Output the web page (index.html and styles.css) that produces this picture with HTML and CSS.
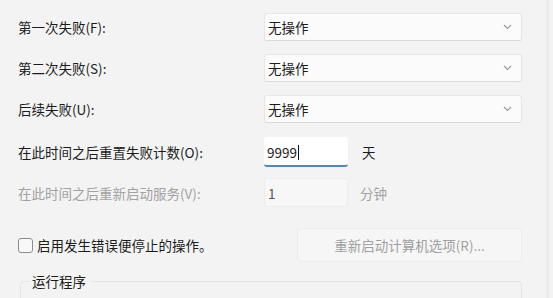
FILE: index.html
```html
<!DOCTYPE html>
<html lang="zh-CN">
<head>
<meta charset="utf-8">
<link rel="stylesheet" href="styles.css">
</head>
<body>
<div class="page">
  <div class="form">
    <div class="row r1">
      <div class="label">第一次失败(F):</div>
      <div class="select"><span>无操作</span><svg class="chev" width="9" height="6" viewBox="0 0 9 6"><path d="M1 1 L4.5 4.5 L8 1" fill="none" stroke="#9a9a9a" stroke-width="1.1"/></svg></div>
    </div>
    <div class="row r2">
      <div class="label">第二次失败(S):</div>
      <div class="select"><span>无操作</span><svg class="chev" width="9" height="6" viewBox="0 0 9 6"><path d="M1 1 L4.5 4.5 L8 1" fill="none" stroke="#9a9a9a" stroke-width="1.1"/></svg></div>
    </div>
    <div class="row r3">
      <div class="label">后续失败(U):</div>
      <div class="select"><span>无操作</span><svg class="chev" width="9" height="6" viewBox="0 0 9 6"><path d="M1 1 L4.5 4.5 L8 1" fill="none" stroke="#9a9a9a" stroke-width="1.1"/></svg></div>
    </div>
    <div class="row r4">
      <div class="label">在此时间之后重置失败计数(O):</div>
      <div class="numwrap">
        <div class="num active"><span>9999</span><span class="caret"></span></div>
        <span class="unit">天</span>
      </div>
    </div>
    <div class="row r5">
      <div class="label disabled">在此时间之后重新启动服务(V):</div>
      <div class="numwrap">
        <div class="num off"><span>1</span></div>
        <span class="unit disabled">分钟</span>
      </div>
    </div>
    <div class="row r6">
      <div class="check"><span class="box"></span><span>启用发生错误便停止的操作。</span></div>
      <div class="btn">重新启动计算机选项(R)...</div>
    </div>
    <div class="group">
      <span class="legend">运行程序</span>
    </div>
  </div>
  <div class="edge"></div>
</div>
</body>
</html>
```
FILE: styles.css
```css
html, body {
  margin: 0;
  padding: 0;
  background: #f3f3f3;
}
body {
  width: 553px;
  height: 298px;
  overflow: hidden;
  font-family: "Noto Sans CJK SC", "Noto Sans", sans-serif;
  font-size: 13.5px;
  color: #1b1b1b;
}
.page {
  display: flex;
  height: 298px;
  overflow: hidden;
}
.form {
  width: 546px;
  height: 298px;
  overflow: hidden;
  padding: 13px 0 0 18px;
  box-sizing: border-box;
}
.row {
  display: grid;
  grid-template-columns: 246px 258px;
  align-items: center;
}
.r1, .r2, .r3 { height: 28px; }
.r2, .r3 { margin-top: 13px; }
.r4 { height: 30px; margin-top: 14px; }
.r5 { height: 29px; margin-top: 11px; }
.r6 { height: 34px; margin-top: 21px; grid-template-columns: 279px 225px; }
.label { line-height: 18px; white-space: nowrap; }
.disabled { color: #a2a2a2; }
.select {
  height: 28px;
  box-sizing: border-box;
  background: #fbfbfb;
  border: 1px solid #e6e6e6;
  border-bottom-color: #dadada;
  border-radius: 3px;
  display: flex;
  align-items: center;
  justify-content: space-between;
  padding: 0 9px 0 3px;
}
.chev { display: block; }
.numwrap {
  display: flex;
  align-items: center;
}
.num {
  width: 84px;
  box-sizing: border-box;
  display: flex;
  align-items: center;
  padding-left: 3px;
  border-radius: 3px;
}
.num.active {
  height: 30px;
  background: #ffffff;
  border-bottom: 2px solid #4f86c6;
  padding-top: 2px;
}
.caret {
  display: inline-block;
  width: 1px;
  height: 15px;
  background: #111;
  margin-left: 1px;
}
.num.off {
  height: 29px;
  background: #f7f7f7;
  border: 1px solid #ececec;
  color: #555;
}
.unit { margin-left: 14px; }
.unit.disabled { margin-left: 12px; }
.check {
  display: flex;
  align-items: center;
  gap: 4px;
}
.box {
  width: 13px;
  height: 13px;
  border: 1px solid #8d8d8d;
  border-radius: 3px;
  background: #f8f8f8;
}
.btn {
  height: 34px;
  box-sizing: border-box;
  border: 1px solid #ececec;
  border-radius: 4px;
  background: #f6f6f6;
  color: #a0a0a0;
  display: flex;
  align-items: center;
  justify-content: center;
}
.group {
  margin-top: 19px;
  margin-left: 2px;
  width: 502px;
  height: 30px;
  box-sizing: border-box;
  border: 1px solid #e4e4e4;
  border-radius: 4px;
  position: relative;
}
.legend {
  position: absolute;
  top: -11px;
  left: 9px;
  padding: 0 5px 0 2px;
  background: #f3f3f3;
  line-height: 20px;
}
.edge {
  width: 3px;
  height: 298px;
  background: #ebebeb;
}
```
